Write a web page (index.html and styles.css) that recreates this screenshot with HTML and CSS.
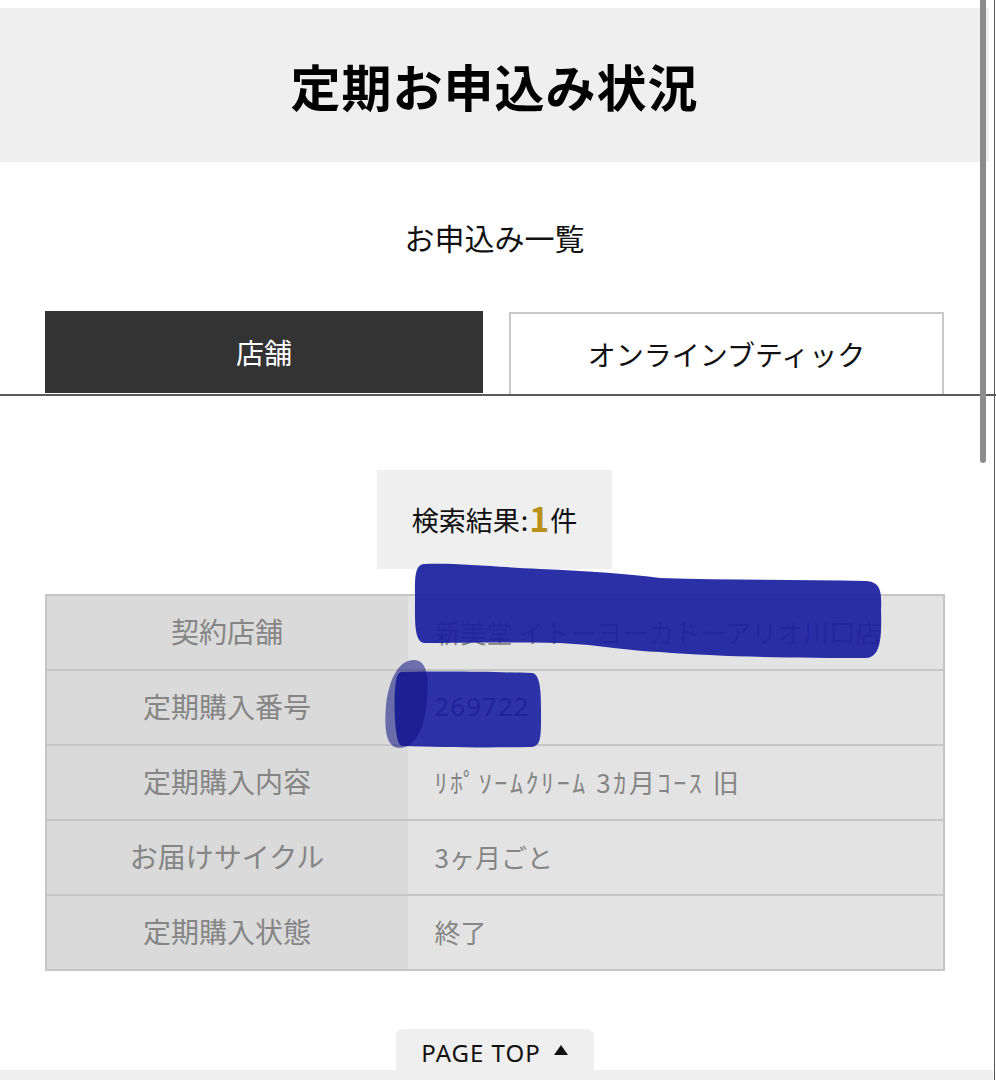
FILE: index.html
```html
<!DOCTYPE html>
<html lang="ja">
<head>
<meta charset="utf-8">
<title>定期お申込み状況</title>
<link rel="stylesheet" href="styles.css">
</head>
<body>
<div class="page">
  <div class="main">
    <header class="page-head"><h1>定期お申込み状況</h1></header>
    <h2 class="subtitle">お申込み一覧</h2>
    <div class="tabs">
      <div class="tab tab-active">店舗</div>
      <div class="tab">オンラインブティック</div>
    </div>
    <div class="content">
      <div class="result">検索結果<span class="colon">:</span><span class="count">1</span>件</div>
      <table class="info">
        <tr><th>契約店舗</th><td>新美堂 イトーヨーカドーアリオ川口店</td></tr>
        <tr><th>定期購入番号</th><td class="num">269722</td></tr>
        <tr><th>定期購入内容</th><td class="narrow">ﾘﾎﾟｿｰﾑｸﾘｰﾑ 3ｶ月ｺｰｽ 旧</td></tr>
        <tr><th>お届けサイクル</th><td>3ヶ月ごと</td></tr>
        <tr><th>定期購入状態</th><td>終了</td></tr>
      </table>
      <div class="pagetop-wrap"><a class="pagetop">PAGE TOP<span class="tri"></span></a></div>
    </div>
  </div>
  <div class="footer-band"></div>
  <svg class="scribble" width="996" height="1080" viewBox="0 0 996 1080">
    <path d="M424 564 C460 563 495 567 540 569 C590 571 630 574 660 578 C730 580 800 580 866 581 C880 582 882 590 881 610 C882 640 880 657 866 658 C800 658 720 657 660 652 C630 651 600 645 560 643 C500 642 460 643 424 643 C414 642 415 620 415 600 C415 580 414 565 424 564 Z" fill="rgba(26,30,160,0.92)"/>
    <path d="M402 672 C450 671 500 672 532 673 C542 674 541 700 541 720 C541 740 540 747 530 747 C480 748 440 747 402 746 C394 745 394 700 395 690 C396 676 398 672 402 672 Z" fill="rgba(26,30,160,0.9)"/>
    <path d="M414 660 C428 660 429 680 427 700 C425 725 418 746 400 748 C386 748 384 730 386 705 C389 680 398 660 414 660 Z" fill="rgba(14,18,130,0.55)"/>
  </svg>
  <div class="scroll-thumb"></div>
  <div class="edge-line"></div>
</div>
</body>
</html>
```
FILE: styles.css
```css
html, body {
  margin: 0;
  padding: 0;
  background: #fff;
}
body {
  font-family: "Noto Sans CJK JP", "Noto Sans", sans-serif;
  color: #111;
}
.page {
  position: relative;
  width: 996px;
  height: 1080px;
  overflow: hidden;
  display: flex;
  flex-direction: column;
}
.main {
  width: 989px;
  padding-top: 8px;
  flex: 1;
  min-height: 0;
}
.page-head {
  height: 154px;
  background: #efefef;
  display: flex;
  align-items: center;
  justify-content: center;
}
.page-head h1 {
  margin: 0;
  font-size: 50px;
  font-weight: 700;
  line-height: 1;
  color: #000;
  letter-spacing: 1px;
}
.subtitle {
  margin: 0;
  padding-top: 57px;
  height: 92px;
  line-height: 36px;
  font-size: 30px;
  font-weight: 400;
  text-align: center;
  color: #111;
}
.tabs {
  display: grid;
  grid-template-columns: 438px 435px;
  column-gap: 26px;
  padding: 0 0 0 45px;
  position: relative;
}
.tabs::after {
  content: "";
  position: absolute;
  left: 0;
  right: -7px;
  bottom: -2px;
  height: 2px;
  background: #5a5a5a;
}
.tab {
  height: 80px;
  display: flex;
  align-items: center;
  justify-content: center;
  font-size: 28px;
  color: #111;
  border: 2px solid #c8c8c8;
  border-bottom: none;
  background: #fff;
  margin-top: 1px;
}
.tab-active {
  background: #333;
  color: #fff;
  margin-top: 0;
  height: 82px;
  border: none;
}
.content {
  padding-top: 76px;
  display: flex;
  flex-direction: column;
  align-items: center;
}
.result {
  width: 235px;
  height: 99px;
  background: #efefef;
  display: flex;
  align-items: center;
  justify-content: center;
  font-size: 27px;
  color: #111;
}
.colon {
  margin: 0 1px 0 1px;
}
.count {
  color: #b8911c;
  font-weight: 700;
  font-size: 34px;
  line-height: 1;
  margin-right: 1px;
  position: relative;
  top: -2px;
}
.info {
  margin-top: 25px;
  width: 900px;
  border-collapse: collapse;
  border: 2px solid #c6c6c6;
  table-layout: fixed;
}
.info tr {
  height: 75px;
  border-top: 2px solid #c6c6c6;
}
.info th {
  width: 361px;
  background: #dadada;
  font-weight: 400;
  font-size: 28px;
  color: #858585;
  text-align: center;
  padding: 0 0 3px;
}
.info td {
  background: #e3e3e3;
  font-size: 26px;
  color: #858585;
  padding: 0 0 3px 27px;
}
.info td.num {
  color: #555;
  font-family: "Noto Sans", sans-serif;
  letter-spacing: 1px;
}
.info td.narrow {
  font-size: 26px;
  letter-spacing: 2.6px;
}
.pagetop-wrap {
  margin-top: 58px;
  width: 100%;
  display: flex;
  justify-content: center;
}
.pagetop {
  width: 198px;
  height: 42px;
  box-sizing: border-box;
  background: #efefef;
  border-radius: 7px 7px 0 0;
  display: flex;
  align-items: center;
  justify-content: center;
  font-family: "Noto Sans", sans-serif;
  font-size: 24px;
  color: #111;
  letter-spacing: 1px;
  padding-top: 4px;
}
.tri {
  width: 0;
  height: 0;
  border-left: 7px solid transparent;
  border-right: 7px solid transparent;
  border-bottom: 10px solid #111;
  margin-left: 13px;
  position: relative;
  top: -2px;
}
.footer-band {
  height: 10px;
  flex: none;
  background: #efefef;
  width: 993px;
}
.scribble {
  position: absolute;
  left: 0;
  top: 0;
  pointer-events: none;
}
.scroll-thumb {
  position: absolute;
  left: 980px;
  top: 0;
  width: 6px;
  height: 463px;
  background: #8c8c8c;
  border-radius: 0 0 3px 3px;
}
.edge-line {
  position: absolute;
  left: 994px;
  top: 0;
  width: 1px;
  height: 1080px;
  background: #555;
}
```
